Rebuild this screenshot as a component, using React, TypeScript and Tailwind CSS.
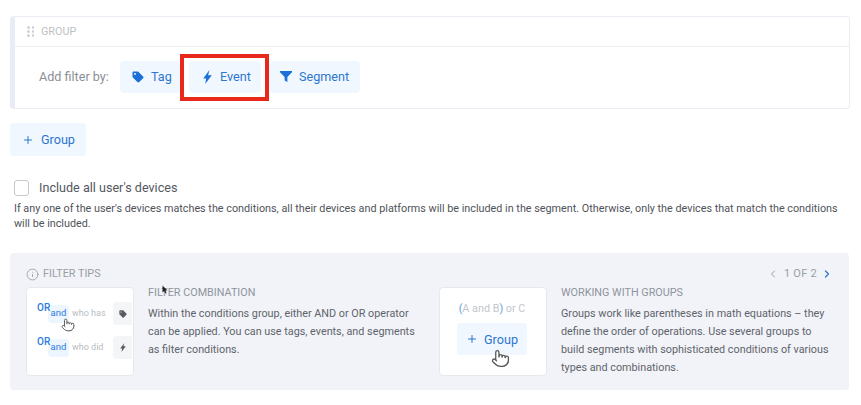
import { Plus, Pointer, Info, ChevronLeft, ChevronRight } from 'lucide-react';

const TagIcon = ({ className }: { className: string }) => (
  <svg viewBox="0 0 12 12" className={className} fill="currentColor">
    <path d="M0.5 1.6C0.5 1 1 0.5 1.6 0.5H5.6C6 0.5 6.3 0.6 6.6 0.9L11.1 5.4C11.6 5.9 11.6 6.7 11.1 7.2L7.2 11.1C6.7 11.6 5.9 11.6 5.4 11.1L0.9 6.6C0.6 6.3 0.5 6 0.5 5.6Z" />
    <circle cx="3" cy="3" r="0.9" fill="white" />
  </svg>
);

const BoltIcon = ({ className }: { className: string }) => (
  <svg viewBox="0 0 8 13" className={className} fill="currentColor">
    <path d="M5.8 0L0 7.8H2.8L1.8 13L8 4.8H4.6Z" />
  </svg>
);

const FunnelIcon = ({ className }: { className: string }) => (
  <svg viewBox="0 0 12 11" className={className} fill="currentColor">
    <path d="M0 0H12V1.3L7.4 6V11L4.6 9.6V6L0 1.3Z" />
  </svg>
);

const FilterButton = ({ icon, label, className }: { icon: React.ReactNode; label: string; className: string }) => (
  <button className={`flex h-8 items-center rounded bg-[#f1f7fe] text-[12.6px] text-[#2b76cf] ${className}`}>
    {icon}
    <span className="relative top-[1px]">{label}</span>
  </button>
);

const OrRow = ({ text, icon, hand }: { text: string; icon: React.ReactNode; hand?: boolean }) => (
  <div className="relative flex h-[23px] items-center pl-[21px]">
    <span className="absolute left-[10px] top-[-2px] text-[10px] font-medium text-[#2b7be0]">OR</span>
    <span className="flex h-[18px] w-[21px] items-center justify-center rounded-sm bg-[#edf5fe] text-[9.5px] text-[#2b7be0]">and</span>
    <span className="ml-[3px] w-[41px] text-[9px] text-[#b9bcc2]">{text}</span>
    <span className="flex h-[23px] w-[19px] items-center justify-center rounded-l bg-[#f4f5f7] text-[#555a60]">{icon}</span>
    {hand && <Pointer className="absolute left-[34px] top-[16px] h-[14px] w-[14px] fill-white text-[#555]" strokeWidth={1.6} />}
  </div>
);

const Tip = ({ title, children, art }: { title: string; children: React.ReactNode; art: React.ReactNode }) => (
  <div className="flex">
    <div className="h-[89px] w-[108px] shrink-0 overflow-hidden rounded border border-[#e6e8ec] bg-white">{art}</div>
    <div className="ml-[14px] mt-[-1px] w-[270px]">
      <h3 className="text-[10.8px] leading-[14px] text-[#8f949c]">{title}</h3>
      <p className="mt-[5px] text-[10.8px] leading-[18px] text-[#5f646b]">{children}</p>
    </div>
  </div>
);

export default function App() {
  return (
    <div className="relative h-[405px] w-[861px] overflow-hidden bg-white px-[10px] pt-[16px] font-['Roboto',sans-serif]">
      <section className="w-[840px] rounded border border-[#e9ecf2] border-l-[5px] border-l-[#e8edf5] bg-white">
        <div className="flex h-[30px] items-center border-b border-[#eceef2] pl-[12px]">
          <div className="grid grid-cols-2 gap-x-[2px] gap-y-[1.5px]">
            {[0, 1, 2, 3, 4, 5].map((i) => (
              <span key={i} className="h-[2.5px] w-[2.5px] rounded-full bg-[#cfd2d6]" />
            ))}
          </div>
          <span className="relative top-[1px] ml-[7px] text-[10.8px] text-[#bcbfc4]">GROUP</span>
        </div>
        <div className="flex h-[61px] items-center pb-[2px] pl-[24px]">
          <span className="relative top-[1px] mr-[10px] w-[71px] whitespace-nowrap text-[12.6px] text-[#8b8f95]">Add filter by:</span>
          <FilterButton className="w-[61px] pl-[12px]" label="Tag" icon={<TagIcon className="mr-[7px] h-3 w-3 text-[#1b6fd6]" />} />
          <FilterButton className="ml-[8px] w-[72px] pl-[14px]" label="Event" icon={<BoltIcon className="mr-[8px] h-[14px] w-[9px] text-[#1b6fd6]" />} />
          <FilterButton className="ml-[8px] w-[91px] pl-[11px]" label="Segment" icon={<FunnelIcon className="mr-[7px] h-[11px] w-3 text-[#1b6fd6]" />} />
        </div>
      </section>

      <div className="absolute left-[180px] top-[54px] h-[47px] w-[89px] border-[4px] border-[#e8281a]" />

      <button className="mt-[14px] flex h-[33px] w-[76px] items-center rounded bg-[#f1f7fe] pl-[12px] text-[12.6px] text-[#2b76cf]">
        <Plus className="mr-[7px] h-3 w-3" strokeWidth={2} />
        <span className="relative top-[1px]">Group</span>
      </button>

      <label className="mt-[24px] flex h-[15px] items-center pl-[4px]">
        <span className="h-[16px] w-[15px] rounded-[3px] border border-[#c6c8cc] bg-white" />
        <span className="relative top-[1px] ml-[10px] text-[12.6px] text-[#54585e]">Include all user's devices</span>
      </label>
      <p className="mt-[6px] w-[835px] pl-[4px] text-[10.8px] leading-[15px] text-[#4f5359]">
        If any one of the user's devices matches the conditions, all their devices and platforms will be included in the segment. Otherwise, only the devices that match the conditions will be included.
      </p>

      <section className="mt-[22px] h-[137px] w-[839px] rounded bg-[#f1f3f8] pl-[16px] pr-[16px] pt-[14px]">
        <div className="flex h-[14px] items-center justify-between">
          <div className="flex items-center text-[10.8px] text-[#9a9ea5]">
            <Info className="mr-[4px] h-[13px] w-[13px]" strokeWidth={1.6} />
            FILTER TIPS
          </div>
          <div className="flex items-center text-[11px] tracking-wide text-[#9a9ea5]">
            <ChevronLeft className="mr-[5px] h-3 w-3" strokeWidth={2} />
            <span>1 OF 2</span>
            <ChevronRight className="ml-[4px] h-3 w-3 text-[#2b76cf]" strokeWidth={2.5} />
          </div>
        </div>
        <div className="mt-[6px] grid grid-cols-[413px_1fr]">
          <Tip
            title="FILTER COMBINATION"
            art={
              <div className="flex flex-col gap-[11px] pt-[14px]">
                <OrRow text="who has" hand icon={<TagIcon className="h-[8px] w-[8px]" />} />
                <OrRow text="who did" icon={<BoltIcon className="h-[9px] w-[6px]" />} />
              </div>
            }
          >
            Within the conditions group, either AND or OR operator can be applied. You can use tags, events, and segments as filter conditions.
          </Tip>
          <Tip
            title="WORKING WITH GROUPS"
            art={
              <div className="relative flex flex-col items-center pr-[2px] pt-[14px]">
                <span className="text-[10.8px] leading-[14px] text-[#c3c6cb]">
                  <span className="text-[#5d9be0]">(</span>A and B<span className="text-[#5d9be0]">)</span> or C
                </span>
                <span className="mt-[7px] flex h-[32px] w-[70px] items-center justify-center rounded bg-[#f1f7fe] text-[12.6px] text-[#2b76cf]">
                  <Plus className="mr-[6px] h-3 w-3" strokeWidth={2} />
                  <span className="relative top-[1px]">Group</span>
                </span>
                <Pointer className="absolute left-[51px] top-[61px] h-[19px] w-[19px] fill-white text-[#555]" strokeWidth={1.6} />
              </div>
            }
          >
            Groups work like parentheses in math equations – they define the order of operations. Use several groups to build segments with sophisticated conditions of various types and combinations.
          </Tip>
        </div>
      </section>

      <svg viewBox="0 0 6 9" className="absolute left-[162px] top-[285px] h-[9px] w-[6px]">
        <path d="M0.5 0.5V7.5L2.2 6L3.5 8.5L4.6 8L3.4 5.5H5.5Z" fill="#222" />
      </svg>
    </div>
  );
}
